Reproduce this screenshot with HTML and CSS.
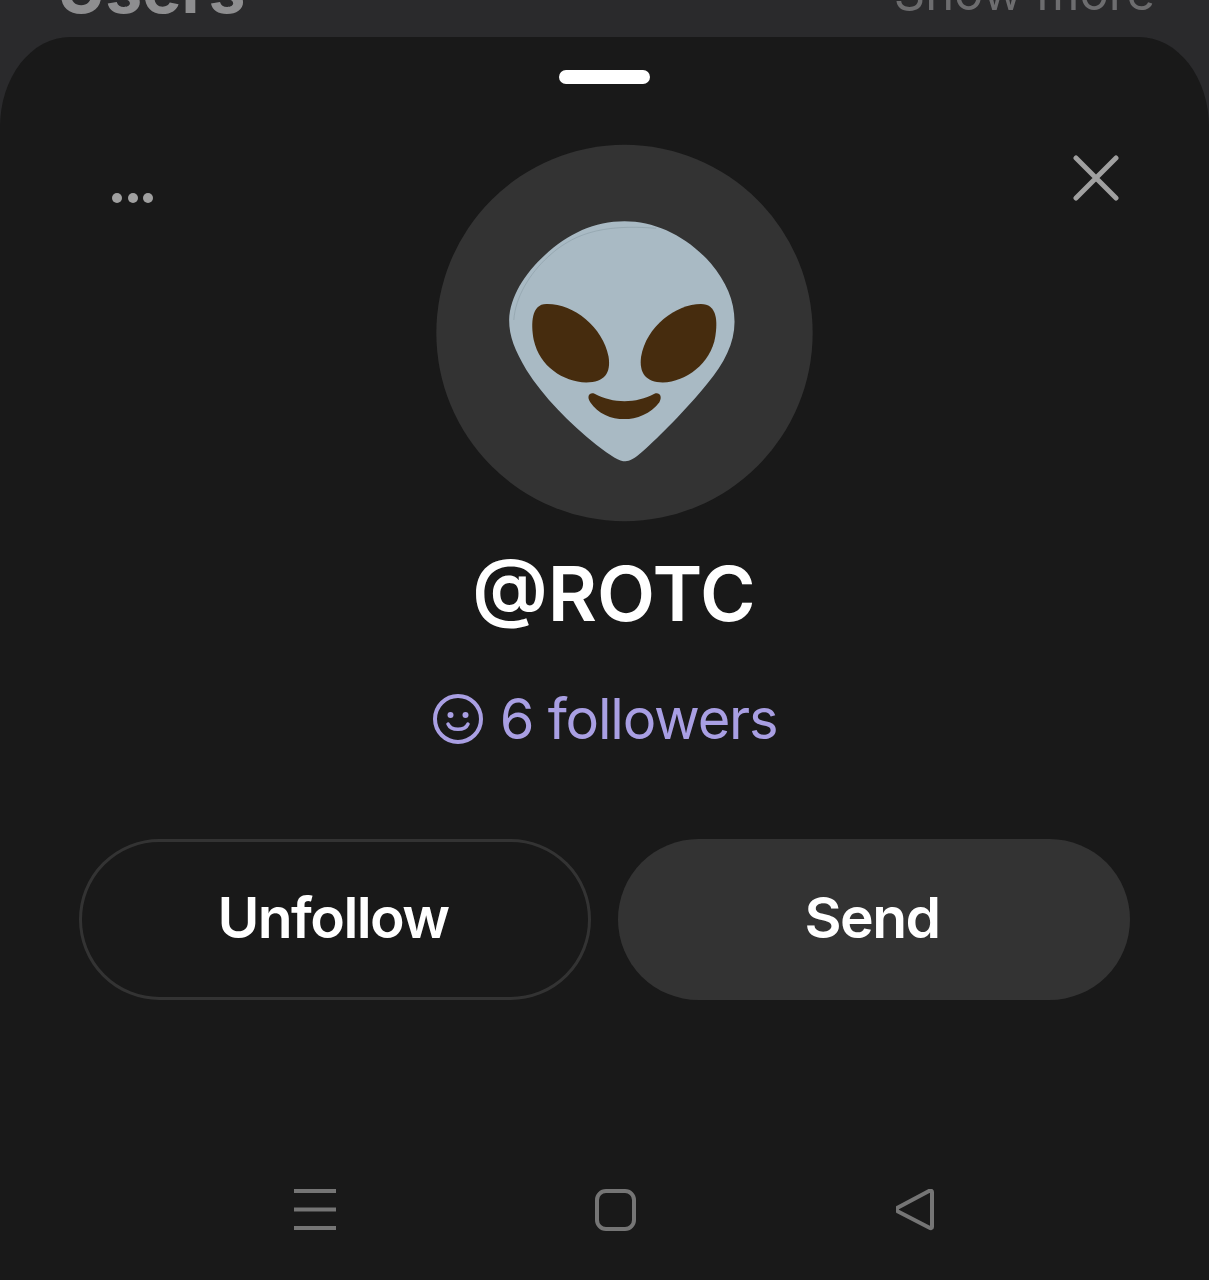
FILE: index.html
```html
<!DOCTYPE html>
<html lang="en">
<head>
    <meta charset="UTF-8">
    <meta name="viewport" content="width=device-width, initial-scale=1.0">
    <title>Profile Sheet</title>
    <link rel="stylesheet" href="styles.css">
</head>
<body>
    <!-- Page behind the sheet, only the bottom of this row is visible -->
    <div class="behind">
        <span class="behind-title">Users</span>
        <span class="behind-link">Show more</span>
    </div>

    <div class="sheet">
        <div class="handle"></div>

        <div class="top-row">
            <div class="dots"><span></span><span></span><span></span></div>
            <div class="avatar">
                <svg viewBox="18 12 1134 1134" width="377" height="378">
                    <circle cx="585" cy="579" r="566" fill="#333333"/>
                    <path fill="#a9bac4" d="M585 243 C680 243 775 290 845 370 C890 425 916 480 916 545 C916 610 885 670 835 730 C770 810 690 890 640 935 C615 958 600 965 588 965 C570 965 545 950 500 915 C420 850 340 770 290 690 C255 630 238 590 238 540 C240 470 285 400 345 345 C415 280 495 243 585 243Z"/>
                    <path fill="none" stroke="#8fa1ab" stroke-width="2" d="M252 540 C257 470 300 400 355 350 C425 285 510 250 680 264"/>
                    <path fill="#462c0e" d="M350 492 C430 490 520 560 537 650 C545 700 525 728 470 728 C400 725 330 680 312 600 C303 550 305 492 350 492Z"/>
                    <path fill="#462c0e" d="M815 492 C740 492 650 560 635 650 C628 700 650 728 700 728 C770 725 845 670 858 590 C866 540 862 492 815 492Z"/>
                    <path fill="#462c0e" d="M495 762 C550 792 620 792 675 762 C690 756 700 770 690 787 C665 822 620 838 585 838 C545 838 505 822 482 787 C470 770 480 756 495 762Z"/>
                </svg>
            </div>
            <svg class="close" viewBox="0 0 46 46" width="46" height="46">
                <path d="M3 3 L43 43 M43 3 L3 43" fill="none" stroke="#a0a0a0" stroke-width="5" stroke-linecap="round"/>
            </svg>
        </div>

        <div class="name">@ROTC</div>

        <div class="followers">
            <svg viewBox="0 0 50 50" width="50" height="50">
                <circle cx="25" cy="25" r="23" fill="none" stroke="#a99fe3" stroke-width="4"/>
                <circle cx="17.5" cy="21" r="3" fill="#a99fe3"/>
                <circle cx="32.5" cy="21" r="3" fill="#a99fe3"/>
                <path d="M15 30 C18 37 32 37 35 30" fill="none" stroke="#a99fe3" stroke-width="3.5" stroke-linecap="round"/>
            </svg>
            <span>6 followers</span>
        </div>

        <div class="actions">
            <div class="btn btn-outline">Unfollow</div>
            <div class="btn btn-filled">Send</div>
        </div>

        <div class="nav">
            <svg viewBox="0 0 42 42" width="42" height="42">
                <path d="M0 2 H42 M0 20.5 H42 M0 39 H42" fill="none" stroke="#757575" stroke-width="4"/>
            </svg>
            <svg viewBox="0 0 42 42" width="42" height="42">
                <rect x="2" y="2" width="37" height="38" rx="9" fill="none" stroke="#757575" stroke-width="4"/>
            </svg>
            <svg viewBox="2 0 42 42" width="42" height="42">
                <path d="M38 3 V38 Q38 40 35 38.500 L4 22.500 Q1 20.500 4 18.500 L35 2 Q38 1 38 3Z" fill="none" stroke="#757575" stroke-width="4" stroke-linejoin="round"/>
            </svg>
        </div>
    </div>
</body>
</html>
```

FILE: styles.css
```css
html, body {
    margin: 0;
    padding: 0;
}
body {
    width: 1209px;
    height: 1280px;
    overflow: hidden;
    background-color: #2a2a2c;
    font-family: Inter, "Liberation Sans", sans-serif;
}
.behind {
    height: 37px;
    padding: 0 54px 0 57px;
    box-sizing: border-box;
    display: flex;
    justify-content: space-between;
    align-items: flex-end;
    overflow: hidden;
}
.behind-title {
    flex: none;
    margin-bottom: 41px;
    font-size: 66px;
    line-height: 14px;
    font-weight: 700;
    color: #8e8e90;
}
.behind-link {
    flex: none;
    margin-bottom: 37px;
    font-size: 49px;
    line-height: 14px;
    color: #6d6d6f;
}
.sheet {
    height: 1243px;
    background-color: #191919;
    border-radius: 70px 70px 0 0 / 90px 90px 0 0;
    overflow: hidden;
}
.handle {
    width: 91px;
    height: 14px;
    margin: 33px auto 0;
    background-color: #ffffff;
    border-radius: 7px;
}
.top-row {
    display: flex;
    align-items: flex-start;
    margin-top: 60px;
    padding-left: 112px;
}
.dots {
    display: flex;
    gap: 5.5px;
    margin-top: 49px;
}
.dots span {
    width: 10px;
    height: 10px;
    border-radius: 50%;
    background-color: #a0a0a0;
}
.avatar {
    margin-left: 283px;
    height: 378px;
}
.close {
    margin: 11px 0 0 260px;
}
.name {
    margin-top: 27px;
    padding-left: 19px;
    text-align: center;
    font-size: 75.5px;
    line-height: 90px;
    font-weight: 600;
    color: #ffffff;
}
.followers {
    display: flex;
    justify-content: center;
    align-items: center;
    gap: 17px;
    margin-top: 45px;
    padding-left: 1px;
    font-size: 56px;
    letter-spacing: -1.2px;
    line-height: 70px;
    color: #a99fe3;
}
.actions {
    display: flex;
    gap: 27px;
    margin-top: 85px;
    padding-left: 79px;
}
.btn {
    width: 512px;
    height: 161px;
    box-sizing: border-box;
    padding: 0 4px 4px 0;
    border-radius: 81px;
    display: flex;
    justify-content: center;
    align-items: center;
    font-size: 57px;
    letter-spacing: -1.6px;
    font-weight: 600;
    color: #ffffff;
}
.btn-outline {
    border: 3px solid #333333;
}
.btn-filled {
    background-color: #333333;
}
.nav {
    display: flex;
    gap: 259px;
    margin-top: 189px;
    padding-left: 294px;
}
```
